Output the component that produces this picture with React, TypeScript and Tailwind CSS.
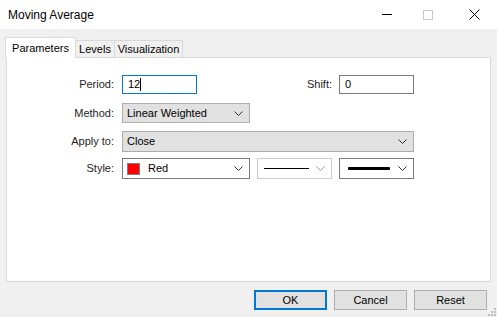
import React from "react";

const font = { fontFamily: '"Liberation Sans", Arial, sans-serif' };

function Chevron({ color = "#333" }: { color?: string }) {
  return (
    <svg width="9" height="5" viewBox="0 0 9 5" className="shrink-0">
      <path d="M0.5 0.5 L4.5 4.5 L8.5 0.5" fill="none" stroke={color} strokeWidth="1" />
    </svg>
  );
}

function Label({ text, w = "w-[107px]" }: { text: string; w?: string }) {
  return <div className={`${w} shrink-0 text-right pr-0 text-[#1e1e1e]`}>{text}</div>;
}

export default function App() {
  return (
    <div className="w-[497px] h-[317px] bg-[#f0f0f0] flex flex-col text-[11px] text-black overflow-hidden" style={font}>
      {/* title bar */}
      <div className="h-[29px] bg-white flex items-center shrink-0">
        <div className="pl-[8px] text-[12px] text-black flex-1">Moving Average</div>
        <div className="w-[10px] h-px bg-black mr-[31px]" />
        <div className="w-[10px] h-[10px] border border-[#c8c8c8] mr-[36px]" />
        <svg width="11" height="11" viewBox="0 0 11 11" className="mr-[17px]">
          <path d="M0.5 0.5 L10.5 10.5 M10.5 0.5 L0.5 10.5" stroke="#000" strokeWidth="1" />
        </svg>
      </div>

      {/* tabs */}
      <div className="flex items-end pl-[5px] pt-[7px] h-[28px] shrink-0">
        <div className="relative z-10 h-[21px] w-[71px] bg-white border border-b-0 border-[#d9d9d9] flex items-center justify-center -mb-px">
          Parameters
        </div>
        <div className="h-[17px] w-[39px] border border-l-0 border-b-0 border-[#d9d9d9] flex items-center justify-center">Levels</div>
        <div className="h-[17px] w-[68px] border border-l-0 border-b-0 border-[#d9d9d9] flex items-center justify-center">Visualization</div>
      </div>

      {/* panel */}
      <div className="mx-[6px] ml-[6px] w-[485px] h-[225px] bg-white border border-[#d9d9d9] pt-[17px] flex flex-col shrink-0">
        <div className="flex items-center h-[19px]">
          <Label text="Period:" />
          <div className="ml-[8px] w-[75px] h-[19px] border border-[#0078d7] flex items-center pl-[5px]">
            12<span className="w-px h-[13px] bg-black" />
          </div>
          <div className="w-[135px] text-right text-[#1e1e1e]">Shift:</div>
          <div className="ml-[7px] w-[75px] h-[19px] border border-[#7a7a7a] flex items-center pl-[5px]">0</div>
        </div>

        <div className="flex items-center h-[20px] mt-[9px]">
          <Label text="Method:" />
          <div className="ml-[8px] w-[128px] h-[20px] border border-[#adadad] bg-[#e1e1e1] flex items-center pl-[4px] pr-[6px] justify-between">
            <span>Linear Weighted</span>
            <Chevron />
          </div>
        </div>

        <div className="flex items-center h-[21px] mt-[8px]">
          <Label text="Apply to:" />
          <div className="ml-[8px] w-[292px] h-[21px] border border-[#adadad] bg-[#e1e1e1] flex items-center pl-[4px] pr-[6px] justify-between">
            <span>Close</span>
            <Chevron />
          </div>
        </div>

        <div className="flex items-center h-[21px] mt-[6px]">
          <Label text="Style:" />
          <div className="ml-[8px] w-[128px] h-[21px] border border-[#7a7a7a] flex items-center pl-[4px] pr-[6px]">
            <span className="w-[13px] h-[12px] bg-[#ff0000] border border-[#808080] shrink-0" />
            <span className="ml-[8px] flex-1">Red</span>
            <Chevron />
          </div>
          <div className="ml-[7px] w-[75px] h-[21px] border border-[#cccccc] flex items-center pl-[6px] pr-[6px]">
            <span className="w-[45px] h-px bg-black" />
            <span className="flex-1" />
            <Chevron color="#a0a0a0" />
          </div>
          <div className="ml-[7px] w-[75px] h-[21px] border border-[#7a7a7a] flex items-center pl-[8px] pr-[6px]">
            <span className="w-[42px] h-[3px] bg-black rounded-[1px]" />
            <span className="flex-1" />
            <Chevron />
          </div>
        </div>
      </div>

      {/* buttons */}
      <div className="flex items-start justify-end mt-[8px] pr-[10px] gap-[7px] relative flex-1">
        <div className="w-[73px] h-[20px] border-2 border-[#0078d7] bg-[#e1e1e1] flex items-center justify-center">OK</div>
        <div className="w-[73px] h-[20px] border border-[#adadad] bg-[#e1e1e1] flex items-center justify-center">Cancel</div>
        <div className="w-[73px] h-[20px] border border-[#adadad] bg-[#e1e1e1] flex items-center justify-center">Reset</div>
        <svg width="8" height="8" viewBox="0 0 8 8" className="absolute right-[1px] bottom-[1px]">
          <rect x="6" y="0" width="2" height="2" fill="#bcbcbc" />
          <rect x="3" y="3" width="2" height="2" fill="#bcbcbc" />
          <rect x="6" y="3" width="2" height="2" fill="#bcbcbc" />
          <rect x="0" y="6" width="2" height="2" fill="#bcbcbc" />
          <rect x="3" y="6" width="2" height="2" fill="#bcbcbc" />
          <rect x="6" y="6" width="2" height="2" fill="#bcbcbc" />
        </svg>
      </div>
    </div>
  );
}
